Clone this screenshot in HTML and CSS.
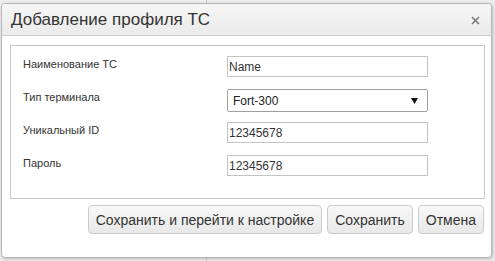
FILE: index.html
```html
<!DOCTYPE html>
<html lang="ru">
<head>
    <meta charset="UTF-8">
    <title>Добавление профиля ТС</title>
    <link rel="stylesheet" href="styles.css">
</head>
<body>

    <div class="dialog">
        <div class="dialog-title">
            <span>Добавление профиля ТС</span>
            <a class="close" title="Закрыть">
                <svg width="9" height="9" viewBox="0 0 9 9">
                    <path d="M1 1 L8 8 M8 1 L1 8" stroke="#7a7a7a" stroke-width="1.6" fill="none"/>
                </svg>
            </a>
        </div>

        <div class="dialog-body">
            <!-- Profile fields -->
            <form class="profile-form">
                <div class="row">
                    <label for="name">Наименование ТС</label>
                    <input type="text" id="name" value="Name">
                </div>
                <div class="row">
                    <label for="terminal">Тип терминала</label>
                    <div class="select-wrap">
                        <select id="terminal">
                            <option>Fort-300</option>
                        </select>
                        <svg class="arrow" width="7" height="6" viewBox="0 0 7 6">
                            <path d="M0 0 L7 0 L3.5 6 Z" fill="#111"/>
                        </svg>
                    </div>
                </div>
                <div class="row">
                    <label for="uid">Уникальный ID</label>
                    <input type="text" id="uid" value="12345678">
                </div>
                <div class="row">
                    <label for="pass">Пароль</label>
                    <input type="text" id="pass" value="12345678">
                </div>
            </form>

            <div class="buttons">
                <button type="button">Сохранить и перейти к настройке</button>
                <button type="button">Сохранить</button>
                <button type="button">Отмена</button>
            </div>
        </div>
    </div>

</body>
</html>
```

FILE: styles.css
```css
body {
    margin: 0;
    padding: 3px 0 0 1px;
    font-family: "Liberation Sans", Arial, sans-serif;
    color: #333;
    background: linear-gradient(to right, #ececec 206px, #c8c8c8 206px, #c8c8c8 207px, #ececec 207px);
    height: 261px;
    box-sizing: border-box;
}

.dialog {
    width: 491px;
    height: 255px;
    box-sizing: border-box;
    background-color: white;
    border: 1px solid #b5b5b5;
    border-radius: 4px;
    box-shadow: 1px 1px 3px rgba(0, 0, 0, 0.2);
    overflow: hidden;
}

.dialog-title {
    height: 31px;
    display: flex;
    align-items: center;
    justify-content: space-between;
    padding: 0 11px 0 9px;
    font-size: 17px;
    background: linear-gradient(#f6f6f6, #ebebeb);
    border-bottom: 1px solid #cfcfcf;
}

.close {
    display: flex;
    cursor: pointer;
    margin-top: 1px;
}

.dialog-body {
    padding: 9px 6px 0 8px;
}

.profile-form {
    margin: 0;
    height: 154px;
    box-sizing: border-box;
    border: 1px solid #c8c8c8;
    padding: 10px 12px 0 12px;
}

.row {
    display: flex;
    align-items: flex-start;
    height: 33px;
}

.row label {
    width: 204px;
    font-size: 11px;
    line-height: 14px;
    padding-top: 1px;
}

.row input {
    width: 201px;
    height: 21px;
    box-sizing: border-box;
    margin: 0;
    padding: 0 1px;
    border: 1px solid #c4c4c4;
    font-family: "Liberation Sans", Arial, sans-serif;
    font-size: 12px;
    color: #333;
}

.select-wrap {
    position: relative;
    width: 201px;
    height: 23px;
}

.select-wrap select {
    appearance: none;
    width: 100%;
    height: 100%;
    margin: 0;
    padding: 0 0 0 5px;
    border: 1px solid #a0a0a0;
    border-radius: 2px;
    background-color: white;
    font-family: "Liberation Sans", Arial, sans-serif;
    font-size: 12px;
    color: #222;
}

.select-wrap .arrow {
    position: absolute;
    right: 10px;
    top: 9px;
    pointer-events: none;
}

.buttons {
    display: flex;
    justify-content: flex-end;
    gap: 5px;
    margin-top: 6px;
    padding-right: 1px;
}

.buttons button {
    height: 29px;
    padding: 0 7px;
    font-family: "Liberation Sans", Arial, sans-serif;
    font-size: 14px;
    color: #333;
    background: linear-gradient(#f8f8f8, #e8e8e8);
    border: 1px solid #cbcbcb;
    border-radius: 4px;
    cursor: pointer;
}
```
